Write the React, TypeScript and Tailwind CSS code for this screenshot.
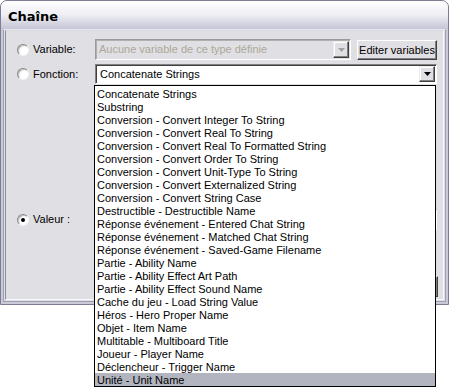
import React from "react";

const items = [
  "Concatenate Strings",
  "Substring",
  "Conversion - Convert Integer To String",
  "Conversion - Convert Real To String",
  "Conversion - Convert Real To Formatted String",
  "Conversion - Convert Order To String",
  "Conversion - Convert Unit-Type To String",
  "Conversion - Convert Externalized String",
  "Conversion - Convert String Case",
  "Destructible - Destructible Name",
  "Réponse événement - Entered Chat String",
  "Réponse événement - Matched Chat String",
  "Réponse événement - Saved-Game Filename",
  "Partie - Ability Name",
  "Partie - Ability Effect Art Path",
  "Partie - Ability Effect Sound Name",
  "Cache du jeu - Load String Value",
  "Héros - Hero Proper Name",
  "Objet - Item Name",
  "Multitable - Multiboard Title",
  "Joueur - Player Name",
  "Déclencheur - Trigger Name",
  "Unité - Unit Name",
];

function Radio({ checked = false }: { checked?: boolean }) {
  return (
    <span className="flex h-[12px] w-[12px] shrink-0 items-center justify-center rounded-full border border-t-[#8a8a8a] border-l-[#8a8a8a] border-r-[#f4f4f4] border-b-[#f4f4f4] bg-white shadow-[inset_1px_1px_1px_#b8b8b8]">
      {checked && <span className="h-[4px] w-[4px] rounded-full bg-black" />}
    </span>
  );
}

function Arrow({ disabled = false }: { disabled?: boolean }) {
  return (
    <span className="flex h-full w-[16px] items-center justify-center border border-t-[#ececec] border-l-[#ececec] border-r-[#404040] border-b-[#404040] bg-[#e0dfe3] shadow-[inset_-1px_-1px_0_#808080,inset_1px_1px_0_#ffffff]">
      <svg width="7" height="4" viewBox="0 0 7 4">
        <path d="M0 0h7L3.5 4z" fill={disabled ? "#a0a0a0" : "#000"} />
      </svg>
    </span>
  );
}

export default function App() {
  return (
    <div className="relative h-[387px] w-[450px] bg-white font-['Liberation_Sans',Arial,sans-serif] text-[11px] text-black">
      {/* window */}
      <div className="flex h-[305px] w-[449px] flex-col overflow-hidden rounded-t-[7px] border border-[#7c7c94] bg-[#c9c9d8]">
        <div className="flex h-[28px] shrink-0 items-center bg-gradient-to-b from-[#ffffff] via-[#eeeef4] to-[#c4c5d5] pl-[7px] pt-[3px] font-['DejaVu_Sans',sans-serif] text-[13px] font-bold text-black">
          Chaîne
        </div>
        <div className="mx-[2px] mb-[2px] flex flex-1 flex-col border-t border-t-[#e8e8ee] border-x border-b border-x-[#9d9db3] border-b-[#9d9db3] bg-[#e0dfe3] px-[1px] pb-[1px]">
          <div className="flex flex-1 flex-col border-l border-t border-l-[#8d8d9d] border-t-[#d8d8e0] border-r border-b border-r-[#f8f8fb] border-b-[#f8f8fb] pl-[11px] pr-[5px] pt-[8px]">
            {/* Variable row */}
            <div className="flex h-[21px] items-center">
              <div className="flex w-[78px] items-center gap-[4px]">
                <Radio />
                <span>Variable:</span>
              </div>
              <div className="flex h-[21px] w-[256px] items-stretch border border-t-[#9a9a9a] border-l-[#9a9a9a] border-r-white border-b-white bg-[#e0dfe3] p-[1px] shadow-[inset_1px_1px_0_#b0b0b0]">
                <span className="flex-1 truncate pl-[2px] leading-[17px] text-[#aca899]">
                  Aucune variable de ce type définie
                </span>
                <Arrow disabled />
              </div>
              <button className="ml-[6px] mt-[1px] h-[20px] w-[80px] border border-t-white border-l-white border-r-[#404040] border-b-[#404040] bg-[#e0dfe3] text-[11px] shadow-[inset_-1px_-1px_0_#808080]">
                Editer variables
              </button>
            </div>
            {/* Fonction row */}
            <div className="mt-[4px] flex h-[20px] items-center">
              <div className="flex w-[78px] items-center gap-[4px]">
                <Radio />
                <span>Fonction:</span>
              </div>
              <div className="flex h-[20px] w-[342px] items-stretch border border-t-[#808080] border-l-[#808080] border-r-white border-b-white bg-white p-[1px] shadow-[inset_1px_1px_0_#404040]">
                <span className="flex-1 truncate pl-[3px] leading-[16px]">Concatenate Strings</span>
                <Arrow />
              </div>
            </div>
            {/* Valeur row */}
            <div className="mt-[125px] flex h-[21px] items-center">
              <div className="flex w-[78px] items-center gap-[4px]">
                <Radio checked />
                <span>Valeur :</span>
              </div>
              <div className="h-[21px] w-[342px] border border-t-[#808080] border-l-[#808080] border-r-white border-b-white bg-white" />
            </div>
            {/* bottom button row */}
            <div className="mt-[46px] flex justify-end">
              <button className="h-[21px] w-[80px] border border-t-white border-l-white border-r-[#404040] border-b-[#404040] bg-[#e0dfe3] text-[11px] shadow-[inset_-1px_-1px_0_#808080]">
                Valeur
              </button>
            </div>
          </div>
        </div>
      </div>

      {/* open dropdown list */}
      <div className="absolute left-[94px] top-[85px] h-[302px] w-[342px] border border-black bg-white pt-[1px]">
        {items.map((t, i) => (
          <div
            key={t}
            className={`box-border h-[13px] overflow-hidden whitespace-nowrap pl-[2px] pt-[1px] leading-[13px] ${
              i === items.length - 1 ? "bg-[#b2b4bf]" : ""
            }`}
          >
            {t}
          </div>
        ))}
      </div>
    </div>
  );
}
